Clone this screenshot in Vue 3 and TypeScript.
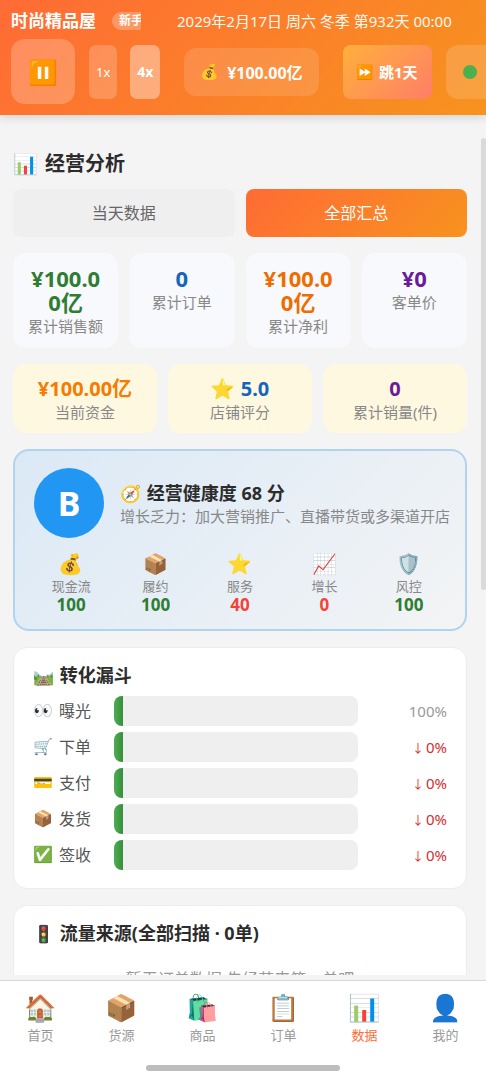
<script setup lang="ts">
import { ref } from 'vue'

interface Metric { value: string; label: string; tone: string; icon?: string }
interface Factor { icon: string; label: string; value: number; tone: string }
interface Stage { icon: string; label: string; rate: string; drop: boolean; fill: number }
interface NavItem { icon: string; label: string }

const tabs = ['当天数据', '全部汇总']
const activeTab = ref(1)
const speeds = ['1x', '4x']
const activeSpeed = ref('4x')

const totals: Metric[] = [
  { value: '¥100.00亿', label: '累计销售额', tone: 'green' },
  { value: '0', label: '累计订单', tone: 'blue' },
  { value: '¥100.00亿', label: '累计净利', tone: 'orange' },
  { value: '¥0', label: '客单价', tone: 'purple' },
]
const store: Metric[] = [
  { value: '¥100.00亿', label: '当前资金', tone: 'amber' },
  { value: '5.0', label: '店铺评分', tone: 'blue', icon: '⭐' },
  { value: '0', label: '累计销量(件)', tone: 'purple' },
]
const factors: Factor[] = [
  { icon: '💰', label: '现金流', value: 100, tone: 'green' },
  { icon: '📦', label: '履约', value: 100, tone: 'green' },
  { icon: '⭐', label: '服务', value: 40, tone: 'red' },
  { icon: '📈', label: '增长', value: 0, tone: 'red' },
  { icon: '🛡️', label: '风控', value: 100, tone: 'green' },
]
const stages: Stage[] = [
  { icon: '👀', label: '曝光', rate: '100%', drop: false, fill: 0 },
  { icon: '🛒', label: '下单', rate: '0%', drop: true, fill: 0 },
  { icon: '💳', label: '支付', rate: '0%', drop: true, fill: 0 },
  { icon: '📦', label: '发货', rate: '0%', drop: true, fill: 0 },
  { icon: '✅', label: '签收', rate: '0%', drop: true, fill: 0 },
]
const nav: NavItem[] = [
  { icon: '🏠', label: '首页' },
  { icon: '📦', label: '货源' },
  { icon: '🛍️', label: '商品' },
  { icon: '📋', label: '订单' },
  { icon: '📊', label: '数据' },
  { icon: '👤', label: '我的' },
]
const activeNav = ref('数据')
</script>

<template>
  <div class="app">
    <header class="top">
      <div class="info">
        <strong class="shop">时尚精品屋</strong>
        <span class="level"><span>新手</span></span>
        <time class="date">2029年2月17日 周六 冬季 第932天 00:00</time>
      </div>
      <div class="controls">
        <button class="pause" aria-label="暂停"><span class="emoji">⏸️</span></button>
        <div class="speeds">
          <button v-for="s in speeds" :key="s" class="speed" :class="{ on: s === activeSpeed }" @click="activeSpeed = s">{{ s }}</button>
        </div>
        <div class="cash"><span class="emoji">💰</span><b>¥100.00亿</b></div>
        <button class="skip"><span class="emoji">⏩</span>跳1天</button>
        <button class="status" aria-label="营业中"><i class="dot"></i></button>
      </div>
    </header>

    <div class="body">
      <main class="content">
        <h1><span class="emoji">📊</span> 经营分析</h1>

        <div class="tabs">
          <button v-for="(t, i) in tabs" :key="t" class="tab" :class="{ on: i === activeTab }" @click="activeTab = i">{{ t }}</button>
        </div>

        <section class="grid four">
          <div v-for="m in totals" :key="m.label" class="metric">
            <b :class="m.tone">{{ m.value }}</b>
            <span>{{ m.label }}</span>
          </div>
        </section>

        <section class="grid three">
          <div v-for="m in store" :key="m.label" class="metric warm">
            <b :class="m.tone"><span v-if="m.icon" class="emoji">{{ m.icon }}</span> {{ m.value }}</b>
            <span>{{ m.label }}</span>
          </div>
        </section>

        <section class="health">
          <div class="summary">
            <div class="grade">B</div>
            <div class="advice">
              <h2><span class="emoji">🧭</span> 经营健康度 68 分</h2>
              <p>增长乏力：加大营销推广、直播带货或多渠道开店</p>
            </div>
          </div>
          <div class="factors">
            <div v-for="f in factors" :key="f.label" class="factor">
              <span class="emoji">{{ f.icon }}</span>
              <span class="name">{{ f.label }}</span>
              <b :class="f.tone">{{ f.value }}</b>
            </div>
          </div>
        </section>

        <section class="card">
          <h2><span class="emoji">🛤️</span> 转化漏斗</h2>
          <div class="stages">
            <div v-for="s in stages" :key="s.label" class="stage">
              <span class="name"><span class="emoji">{{ s.icon }}</span>{{ s.label }}</span>
              <div class="bar"><div class="fill" :style="{ width: s.fill + '%' }"></div></div>
              <span class="rate" :class="{ drop: s.drop }"><span v-if="s.drop" class="arrow">↓</span>{{ s.rate }}</span>
            </div>
          </div>
        </section>

        <section class="card">
          <h2><span class="emoji">🚦</span> 流量来源(全部扫描 · 0单)</h2>
          <p class="empty">暂无订单数据,先经营来第一单吧</p>
        </section>
      </main>
      <div class="track"><div class="thumb"></div></div>
    </div>

    <nav class="nav">
      <div class="items">
        <button v-for="n in nav" :key="n.label" class="item" :class="{ on: n.label === activeNav }" @click="activeNav = n.label">
          <span class="emoji">{{ n.icon }}</span>
          <span>{{ n.label }}</span>
        </button>
      </div>
      <div class="home"></div>
    </nav>
  </div>
</template>

<style>
html, body { background: #f4f4f5; }
</style>

<style scoped>
* { box-sizing: border-box; }
.app {
  height: 100vh;
  display: flex;
  flex-direction: column;
  overflow: hidden;
  background: #f4f4f5;
  color: #2c2c2c;
  font-family: "Noto Sans", "Noto Sans CJK SC", sans-serif;
}
button { font: inherit; color: inherit; border: 0; padding: 0; margin: 0; cursor: pointer; }
h1, h2, p { margin: 0; }
.emoji { font-family: "Noto Color Emoji", "Noto Sans", sans-serif; font-weight: 400; }

.top {
  flex: none;
  padding: 8px 0 11px 11px;
  background: linear-gradient(135deg, #ff6b35, #f7931e);
  color: #fff;
  box-shadow: 0 2px 10px rgba(0, 0, 0, 0.15);
  z-index: 1;
}
.info { display: flex; align-items: center; height: 26px; white-space: nowrap; }
.shop { font-size: 17px; line-height: 24px; }
.level {
  width: 29px;
  margin-left: 16px;
  padding-left: 7px;
  overflow: hidden;
  border-radius: 9px 0 0 9px;
  background: rgba(255, 255, 255, 0.25);
  font-size: 12px;
  line-height: 18px;
  font-weight: 700;
}
.date { margin-left: 36px; font-size: 15px; line-height: 22px; opacity: 0.95; }
.controls { display: flex; align-items: center; height: 65px; margin-top: 5px; overflow: hidden; }
.controls > * { flex: none; }
.pause { width: 64px; height: 65px; border-radius: 14px; background: rgba(255, 255, 255, 0.22); font-size: 24px; }
.speeds { display: flex; gap: 13px; margin-left: 14px; }
.speed { height: 54px; padding: 0 7px; border-radius: 7px; background: rgba(255, 255, 255, 0.2); font-size: 13px; }
.speed.on { background: rgba(255, 255, 255, 0.38); font-weight: 700; font-size: 14px; }
.cash {
  display: flex;
  align-items: center;
  gap: 8px;
  height: 48px;
  margin-left: 24px;
  padding: 0 16px;
  border-radius: 12px;
  background: rgba(255, 255, 255, 0.13);
  font-size: 16px;
}
.cash .emoji { font-size: 15px; }
.skip {
  display: flex;
  align-items: center;
  gap: 5px;
  height: 54px;
  margin-left: 24px;
  padding: 0 14px;
  border-radius: 8px;
  background: linear-gradient(135deg, #ffb03b, #ff7e67);
  font-size: 15px;
  font-weight: 700;
}
.skip .emoji { font-size: 14px; }
.status { width: 64px; height: 54px; margin-left: 14px; padding-left: 17px; border-radius: 12px; background: rgba(255, 255, 255, 0.15); }
.dot { display: block; width: 14px; height: 14px; border-radius: 50%; background: #4caf50; }

.body { flex: 1; min-height: 0; display: flex; overflow: hidden; margin-bottom: 5px; }
.content {
  flex: 1;
  min-width: 0;
  display: flex;
  flex-direction: column;
  gap: 16px;
  padding: 35px 14px 0 13px;
  overflow: hidden;
}
.content > * { flex: none; }
.track { flex: none; width: 5px; padding-top: 23px; }
.thumb { height: 452px; border-radius: 3px; background: #dadada; }

h1 { font-size: 20px; line-height: 28px; margin-bottom: -5px; }
h1 .emoji { margin-right: 2px; }
.tabs { display: grid; grid-template-columns: 1fr 1fr; gap: 11px; }
.tab { height: 48px; border-radius: 8px; background: #efeff0; color: #666; font-size: 16px; line-height: 24px; }
.tab.on { background: linear-gradient(135deg, #ff6b35, #f7931e); color: #fff; }

.grid { display: grid; gap: 11px; }
.four { grid-template-columns: repeat(4, 1fr); }
.three { grid-template-columns: repeat(3, 1fr); }
.metric { padding: 13px 16px 10px; border-radius: 13px; background: #f8f9fc; text-align: center; }
.metric > b { display: block; font-size: 22px; line-height: 24px; word-break: break-all; }
.metric > span { display: block; margin: 0 -8px; color: #888; font-size: 15px; line-height: 24px; }
.metric.warm { padding: 13px 8px 10px; background: #fff8e1; }
.metric.warm > b { font-size: 20px; }
.metric.warm > span { line-height: 22px; }

.green { color: #2e7d32; }
.blue { color: #1565c0; }
.orange { color: #ef6c00; }
.amber { color: #f57c00; }
.purple { color: #6a1b9a; }
.red { color: #f44336; }

.health {
  padding: 17px 19px 15px;
  border: 2px solid #b0d3ee;
  border-radius: 16px;
  background: linear-gradient(135deg, #dbe9f6, #f3f4f5);
}
.summary { display: flex; align-items: center; gap: 16px; }
.grade {
  flex: none;
  width: 70px;
  height: 70px;
  border-radius: 50%;
  background: #2196f3;
  color: #fff;
  font-size: 34px;
  line-height: 70px;
  font-weight: 700;
  text-align: center;
}
.advice { min-width: 0; white-space: nowrap; }
h2 { font-size: 18px; line-height: 24px; }
h2 .emoji { font-size: 17px; margin-right: 1px; }
.advice p { color: #888; font-size: 15px; line-height: 20px; }
.factors { display: grid; grid-template-columns: repeat(5, 1fr); gap: 10px; margin-top: 13px; }
.factor { display: flex; flex-direction: column; align-items: center; }
.factor .emoji { font-size: 20px; line-height: 26px; }
.factor .name { color: #888; font-size: 13px; line-height: 18px; }
.factor b { font-size: 17px; line-height: 19px; }

.card { padding: 15px 19px 18px; border: 1px solid #ededee; border-radius: 14px; background: #fff; }
.stages { display: grid; gap: 6px; margin-top: 8px; }
.stage { display: flex; align-items: center; }
.stage .name { display: flex; align-items: center; gap: 6px; width: 81px; color: #555; font-size: 16px; line-height: 24px; }
.bar { flex: 1; height: 30px; overflow: hidden; border-radius: 8px; background: #efefef; }
.fill { min-width: 9px; height: 100%; background: linear-gradient(90deg, #4caf50, #388e3c); }
.rate { width: 89px; color: #999; font-size: 15px; text-align: right; }
.rate.drop { color: #d32f2f; }
.arrow { margin-right: 2px; font-size: 12px; }
.empty { padding-top: 21px; color: #999; font-size: 16px; line-height: 24px; text-align: center; }

.nav { flex: none; height: 100px; padding-top: 10px; border-top: 1px solid #d8d8d8; background: #fff; }
.items { display: grid; grid-template-columns: repeat(6, 1fr); }
.item { display: flex; flex-direction: column; align-items: center; background: none; color: #999; font-size: 13px; line-height: 18px; }
.item .emoji { font-size: 26px; line-height: 35px; }
.item.on { color: #ff6b35; }
.home { width: 40%; height: 6px; margin: 21px auto 0; border-radius: 3px; background: #bdbdbd; }
</style>
